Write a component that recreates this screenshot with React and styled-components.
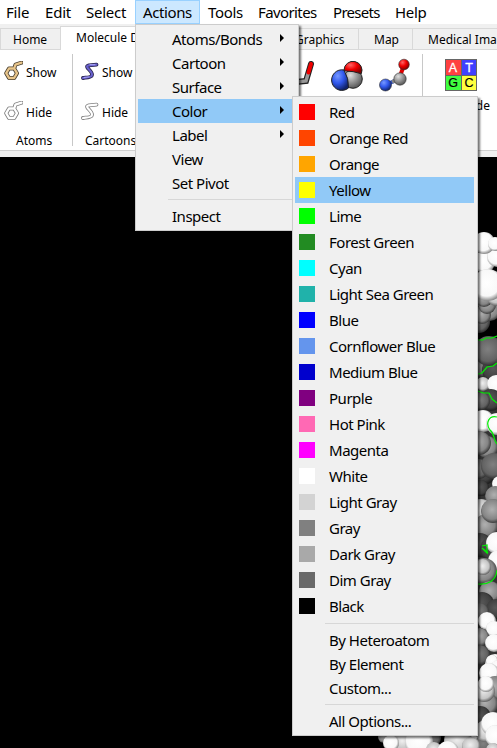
import React from "react";
import styled, { createGlobalStyle } from "styled-components";

const GlobalStyle = createGlobalStyle`
  * { box-sizing: border-box; }
  body { margin: 0; overflow: hidden; background: #000; }
`;

const Window = styled.div`
  position: relative;
  width: 497px;
  height: 748px;
  overflow: hidden;
  display: flex;
  flex-direction: column;
  background: #f0f0f0;
  color: #000;
  font: 12px/16px "Noto Sans", sans-serif;
`;

const MenuBar = styled.nav`
  display: flex;
  flex: none;
  height: 24px;
  background: #fff;
  font: 15px/23px "Noto Sans", sans-serif;
`;

const MenuTitle = styled.div`
  flex: none;
  width: ${(p) => p.$width}px;
  height: 24px;
  padding-left: ${(p) => p.$inset}px;
  padding-top: ${(p) => (p.$open ? 0 : 1)}px;
  white-space: nowrap;
  letter-spacing: ${(p) => p.$spacing}px;
  border: ${(p) => (p.$open ? "1px solid #99d1ff" : "none")};
  background: ${(p) => (p.$open ? "#cce8ff" : "transparent")};
`;

const TabBar = styled.div`
  display: flex;
  flex: none;
  align-items: flex-end;
  height: 26px;
`;

const Tab = styled.div`
  flex: none;
  width: ${(p) => p.$width}px;
  height: ${(p) => (p.$active ? 24 : 22)}px;
  padding: 3px 0 0 ${(p) => p.$inset}px;
  overflow: hidden;
  white-space: nowrap;
  border: 1px solid #d9d9d9;
  border-right-width: ${(p) => (p.$active ? 1 : 0)}px;
  border-bottom-width: ${(p) => (p.$active ? 0 : 1)}px;
  background: ${(p) => (p.$active ? "#fff" : "#f0f0f0")};
`;

const Ribbon = styled.div`
  display: flex;
  flex: none;
  height: 101px;
  padding: 4px 0;
  background: #fff;
  border-bottom: 1px solid #d0d0d0;
`;

const Group = styled.section`
  display: flex;
  flex: none;
  flex-direction: column;
  width: ${(p) => p.$width}px;
  border-right: 1px solid #c8c8c8;
`;

const ToolButton = styled.div`
  display: flex;
  flex: none;
  align-items: center;
  height: ${(p) => p.$height}px;
  padding: 2px 0 0 ${(p) => p.$inset}px;
  gap: 3px;
  svg { margin-bottom: 3px; }
`;

const GroupName = styled.div`
  flex: none;
  padding: 1px 0 0 ${(p) => p.$inset}px;
  line-height: 12px;
  white-space: nowrap;
`;

const PictureTools = styled.div`
  display: flex;
  justify-content: flex-end;
  gap: 14px;
  padding: 4px 10px 0 0;
`;

const SequenceTool = styled.div`
  display: flex;
  flex-direction: column;
  width: 74px;
  padding: 5px 0 0 22px;
`;

const SequenceLabel = styled.div`
  align-self: flex-end;
  margin-top: 7px;
  padding-right: 7px;
`;

const Strip = styled.div`
  flex: none;
  height: 6px;
`;

const Viewport = styled.main`
  flex: 1;
  background: #000;
  svg { display: block; }
`;

const Menu = styled.div`
  position: absolute;
  left: ${(p) => p.$x}px;
  top: ${(p) => p.$y}px;
  width: ${(p) => p.$width}px;
  padding: 2px ${(p) => p.$end}px 2px 2px;
  border: 1px solid #ccc;
  background: #f0f0f0;
  box-shadow: 2px 2px 2px rgba(0, 0, 0, 0.55);
  font: 15px/24px "Noto Sans", sans-serif;
  letter-spacing: -0.48px;
`;

const MenuRow = styled.div`
  display: flex;
  align-items: center;
  height: ${(p) => (p.$tall ? 26 : 24)}px;
  padding-left: 4px;
  background: ${(p) => (p.$active ? "#91c9f7" : "transparent")};
`;

const Swatch = styled.span`
  flex: none;
  width: 16px;
  height: 16px;
  margin-right: 14px;
  background: ${(p) => p.$color};
`;

const RowText = styled.span`
  flex: 1;
  white-space: nowrap;
`;

const Arrow = styled.span`
  width: 0;
  height: 0;
  margin: 0 12px 2px 0;
  border-left: 4px solid #000;
  border-top: 4px solid transparent;
  border-bottom: 4px solid transparent;
`;

const Divider = styled.div`
  height: 1px;
  margin: 4px 0 4px 30px;
  background: #d7d7d7;
`;

const titles = [
  { name: "File", width: 37, inset: 6, spacing: -0.2 },
  { name: "Edit", width: 41, inset: 8, spacing: -0.2 },
  { name: "Select", width: 57, inset: 8, spacing: -0.25 },
  { name: "Actions", width: 65, inset: 7, spacing: -0.4, open: true },
  { name: "Tools", width: 51, inset: 8, spacing: -0.35 },
  { name: "Favorites", width: 74, inset: 7, spacing: -0.6 },
  { name: "Presets", width: 62, inset: 8, spacing: -0.7 },
  { name: "Help", width: 48, inset: 8, spacing: -0.3 },
];

const actions = ["Atoms/Bonds", "Cartoon", "Surface", "Color", "Label", "View", "Set Pivot"];

const colors = [
  ["Red", "#ff0000"], ["Orange Red", "#ff4500"], ["Orange", "#ffa500"],
  ["Yellow", "#ffff00"], ["Lime", "#00ff00"], ["Forest Green", "#228b22"],
  ["Cyan", "#00ffff"], ["Light Sea Green", "#20b2aa"], ["Blue", "#0000ff"],
  ["Cornflower Blue", "#6495ed"], ["Medium Blue", "#0000cd"],
  ["Purple", "#800080"], ["Hot Pink", "#ff69b4"], ["Magenta", "#ff00ff"],
  ["White", "#ffffff"], ["Light Gray", "#d3d3d3"], ["Gray", "#808080"],
  ["Dark Gray", "#a9a9a9"], ["Dim Gray", "#696969"], ["Black", "#000000"],
];

// x, y, radius, shade of each atom sphere, back to front
const atoms = [
  [479, 322, 11, "d"], [490, 311, 10, "m"], [482, 315, 9, "m"], [487, 305, 9, "m"],
  [484, 262, 11, "w"], [497, 257, 10, "w"], [484, 243, 11, "w"], [495, 244, 7, "w"],
  [484, 298, 9, "m"], [497, 295, 11, "l"], [488, 285, 16, "w"],
  [481, 367, 10, "d"], [494, 370, 12, "k"], [489, 351, 15, "d"],
  [488, 392, 12, "k"], [483, 384, 7, "l"], [496, 384, 9, "w"],
  [491, 400, 11, "k"], [481, 401, 9, "d"],
  [483, 421, 11, "w"], [497, 424, 11, "w"], [492, 450, 11, "k"],
  [487, 447, 11, "m"], [479, 443, 12, "m"], [483, 472, 13, "k"],
  [479, 469, 10, "d"], [494, 466, 13, "d"], [500, 484, 8, "w"],
  [481, 488, 8, "k"], [495, 496, 10, "m"], [481, 512, 13, "l"],
  [486, 526, 12, "m"], [493, 511, 12, "m"], [480, 545, 12, "k"],
  [492, 549, 12, "k"], [497, 543, 11, "w"], [499, 561, 11, "w"],
  [484, 571, 13, "m"], [483, 567, 8, "l"], [490, 592, 11, "m"],
  [482, 604, 12, "k"], [496, 609, 10, "k"], [480, 612, 9, "d"],
  [487, 621, 9, "w"], [494, 629, 8, "w"], [480, 637, 9, "m"],
  [494, 643, 9, "w"], [480, 655, 10, "d"], [495, 664, 10, "w"],
  [492, 661, 6, "w"], [499, 669, 9, "w"], [489, 673, 10, "w"],
  [495, 688, 12, "m"], [486, 704, 12, "m"], [484, 691, 11, "l"],
  [486, 684, 8, "w"], [480, 717, 11, "k"], [470, 738, 12, "l"],
  [484, 745, 10, "d"], [486, 731, 11, "l"],
  [493, 724, 12, "w"], [496, 736, 11, "w"], [493, 750, 7, "l"],
  [384, 737, 6, "m"], [403, 742, 10, "l"], [391, 743, 8, "w"],
  [432, 738, 9, "d"], [419, 742, 14, "w"], [434, 750, 8, "l"],
  [458, 741, 14, "l"], [448, 752, 11, "w"], [471, 746, 9, "l"],
];

const shades = {
  w: ["#ffffff", "#f8f8f8", "#787878"],
  l: ["#f0f0f0", "#c5c5c5", "#555555"],
  m: ["#b0b0b0", "#858585", "#333333"],
  d: ["#808080", "#626262", "#292929"],
  k: ["#595959", "#404040", "#191919"],
};

const Molecule = () => (
  <svg width="497" height="591" viewBox="0 157 497 591">
    <defs>
      {Object.entries(shades).map(([id, [a, b, c]]) => (
        <radialGradient key={id} id={`shade-${id}`} cx=".46" cy=".44" r=".58">
          <stop offset="0" stopColor={a} />
          <stop offset=".7" stopColor={b} />
          <stop offset="1" stopColor={c} />
        </radialGradient>
      ))}
    </defs>
    <path d="M478 374L497 362V748H478Z" fill="#333" />
    {atoms.map(([x, y, r, s], i) => (
      <circle key={i} cx={x} cy={y} r={r} fill={`url(#shade-${s})`} />
    ))}
    <g fill="none" stroke="#00f000" strokeWidth="1.2">
      <path d="M478 340h5l3-2 6 0 5-2M478 374l4-1 5-6 6-1 4-3M478 391l5 2 6 0 3 6 5 4M497 417c-8-2-12 6-7 13 5 4 3 9 7 14M482 546l5-1 0 8-5-5 5 4 1 1M478 584c10 1 18-3 19-14" />
    </g>
  </svg>
);

const benzylPath = "M5 7.500h5.200l2.800 4.700-2.800 4.800H5l-2.800-4.800ZM10.200 7.500l1.300-3.800 6-2";

const Benzyl = ({ muted }) => (
  <svg width="19" height="21" viewBox="0 0 19 21" fill="none" strokeLinejoin="round" strokeLinecap="round">
    <path d={benzylPath} stroke={muted ? "#808080" : "#4a4030"} strokeWidth="4" />
    <path d={benzylPath} stroke={muted ? "#fff" : "#e8c58b"} strokeWidth="2.3" />
  </svg>
);

const helixPath = "M15.500 2.700L8 3.300C5 4 6 5.500 8 7.500s4 4.500 2.500 6.500c-1 1.500-5 1.500-8.500 2";

const Helix = ({ muted }) => (
  <svg width="18" height="19" viewBox="0 0 18 19" fill="none" strokeLinejoin="round" strokeLinecap="round">
    <path d={helixPath} stroke={muted ? "#808080" : "#272349"} strokeWidth="3.8" />
    <path d={helixPath} stroke={muted ? "#fff" : "#6860cd"} strokeWidth="2.200" />
    {!muted && <path d="M9 2.700h5M3 15.500l5-.6" stroke="#aaa5f5" />}
  </svg>
);

const ballColors = [
  ["red", "#ff6666", "#f00000", "#820000"],
  ["blue", "#7799ff", "#3158ed", "#10236b"],
  ["gray", "#ddd", "#999", "#555"],
];

const Balls = () => (
  <defs>
    {ballColors.map(([id, a, b, c]) => (
      <radialGradient key={id} id={`ball-${id}`} cx=".36" cy=".3" r=".72">
        <stop offset="0" stopColor={a} />
        <stop offset=".5" stopColor={b} />
        <stop offset="1" stopColor={c} />
      </radialGradient>
    ))}
  </defs>
);

const Stick = () => (
  <svg width="22" height="36" viewBox="0 0 22 36" fill="none" strokeLinecap="round">
    <path d="M2 24l10-1 5-17" stroke="#222" strokeWidth="6" />
    <path d="M2 24l10-1 2-7" stroke="#999" strokeWidth="3.500" />
    <path d="M14.500 14.500l2.500-8.500" stroke="#f00000" strokeWidth="4" />
  </svg>
);

const Spheres = () => (
  <svg width="34" height="36" viewBox="0 0 34 36" stroke="#222" strokeWidth="1">
    <Balls />
    <circle cx="23" cy="21" r="9.300" fill="url(#ball-gray)" />
    <path d="M14 12a9 9 0 1 1 17.300 3.800q-8-3-16.800-2.800Z" fill="url(#ball-red)" />
    <path d="M14 12a10.300 10.300 0 1 0 4.500 18Q19 20.500 14 12Z" fill="url(#ball-blue)" />
  </svg>
);

const BallStick = () => (
  <svg width="34" height="36" viewBox="0 0 34 36">
    <path d="M7 27l14-6" stroke="#244bd0" strokeWidth="4" />
    <path d="M14 24l7-3" stroke="#888" strokeWidth="4" />
    <path d="M21 21l5-14" stroke="#e00000" strokeWidth="4" />
    <g stroke="#333" strokeWidth=".6">
      <circle cx="7.500" cy="27" r="6" fill="url(#ball-blue)" />
      <circle cx="22" cy="21" r="6.200" fill="url(#ball-gray)" />
      <circle cx="26" cy="6.500" r="5.300" fill="url(#ball-red)" />
    </g>
  </svg>
);

const Bases = () => (
  <svg width="32" height="32" viewBox="0 0 32 32" fontFamily="Liberation Sans, sans-serif" fontSize="12.5" textAnchor="middle">
    <path fill="#666" d="M0 0h32v32H0z" />
    <path fill="#ff4040" d="M1 1h15v15H1z" />
    <path fill="#4040ff" d="M17 1h14v15H17z" />
    <path fill="#40ff40" d="M1 17h15v14H1z" />
    <path fill="#ffff40" d="M17 17h14v14H17z" />
    <g fill="#fff" stroke="#fff" strokeWidth=".3">
      <text x="8" y="12.500">A</text>
      <text x="24" y="12.500">T</text>
    </g>
    <g stroke="#000" strokeWidth=".2">
      <text x="8" y="28">G</text>
      <text x="24" y="28">C</text>
    </g>
  </svg>
);

export default function App() {
  return (
    <Window>
      <GlobalStyle />
      <MenuBar>
        {titles.map(({ name, width, inset, spacing, open }) => (
          <MenuTitle key={name} $width={width} $inset={inset} $spacing={spacing} $open={open}>
            {name}
          </MenuTitle>
        ))}
      </MenuBar>
      <TabBar>
        <Tab $width={60} $inset={12}>Home</Tab>
        <Tab $width={140} $inset={15} $active>Molecule Display</Tab>
        <Tab $width={80} $inset={12} />
        <Tab $width={78} $inset={14}>Graphics</Tab>
        <Tab $width={54} $inset={15}>Map</Tab>
        <Tab $width={110} $inset={15}>Medical Image</Tab>
      </TabBar>
      <Ribbon>
        <Group $width={73}>
          <ToolButton $height={36} $inset={4}><Benzyl />Show</ToolButton>
          <ToolButton $height={44} $inset={4}><Benzyl muted />Hide</ToolButton>
          <GroupName $inset={16}>Atoms</GroupName>
        </Group>
        <Group $width={72}>
          <ToolButton $height={36} $inset={8}><Helix />Show</ToolButton>
          <ToolButton $height={44} $inset={8}><Helix muted />Hide</ToolButton>
          <GroupName $inset={12}>Cartoons</GroupName>
        </Group>
        <Group $width={278}>
          <PictureTools>
            <Stick />
            <Spheres />
            <BallStick />
          </PictureTools>
        </Group>
        <SequenceTool>
          <Bases />
          <SequenceLabel>de</SequenceLabel>
        </SequenceTool>
      </Ribbon>
      <Strip />
      <Viewport><Molecule /></Viewport>
      <Menu $x={135} $y={24} $width={164} $end={2}>
        {actions.map((name, i) => (
          <MenuRow key={name} $active={name === "Color"}>
            <Swatch />
            <RowText>{name}</RowText>
            {i < 5 && <Arrow />}
          </MenuRow>
        ))}
        <Divider />
        <MenuRow><Swatch /><RowText>Inspect</RowText></MenuRow>
      </Menu>
      <Menu $x={292} $y={96} $width={186} $end={3}>
        {colors.map(([name, color]) => (
          <MenuRow key={name} $tall $active={name === "Yellow"}>
            <Swatch $color={color} />
            <RowText>{name}</RowText>
          </MenuRow>
        ))}
        <Divider />
        {["By Heteroatom", "By Element", "Custom..."].map((name) => (
          <MenuRow key={name}><Swatch /><RowText>{name}</RowText></MenuRow>
        ))}
        <Divider />
        <MenuRow><Swatch /><RowText>All Options...</RowText></MenuRow>
      </Menu>
    </Window>
  );
}
